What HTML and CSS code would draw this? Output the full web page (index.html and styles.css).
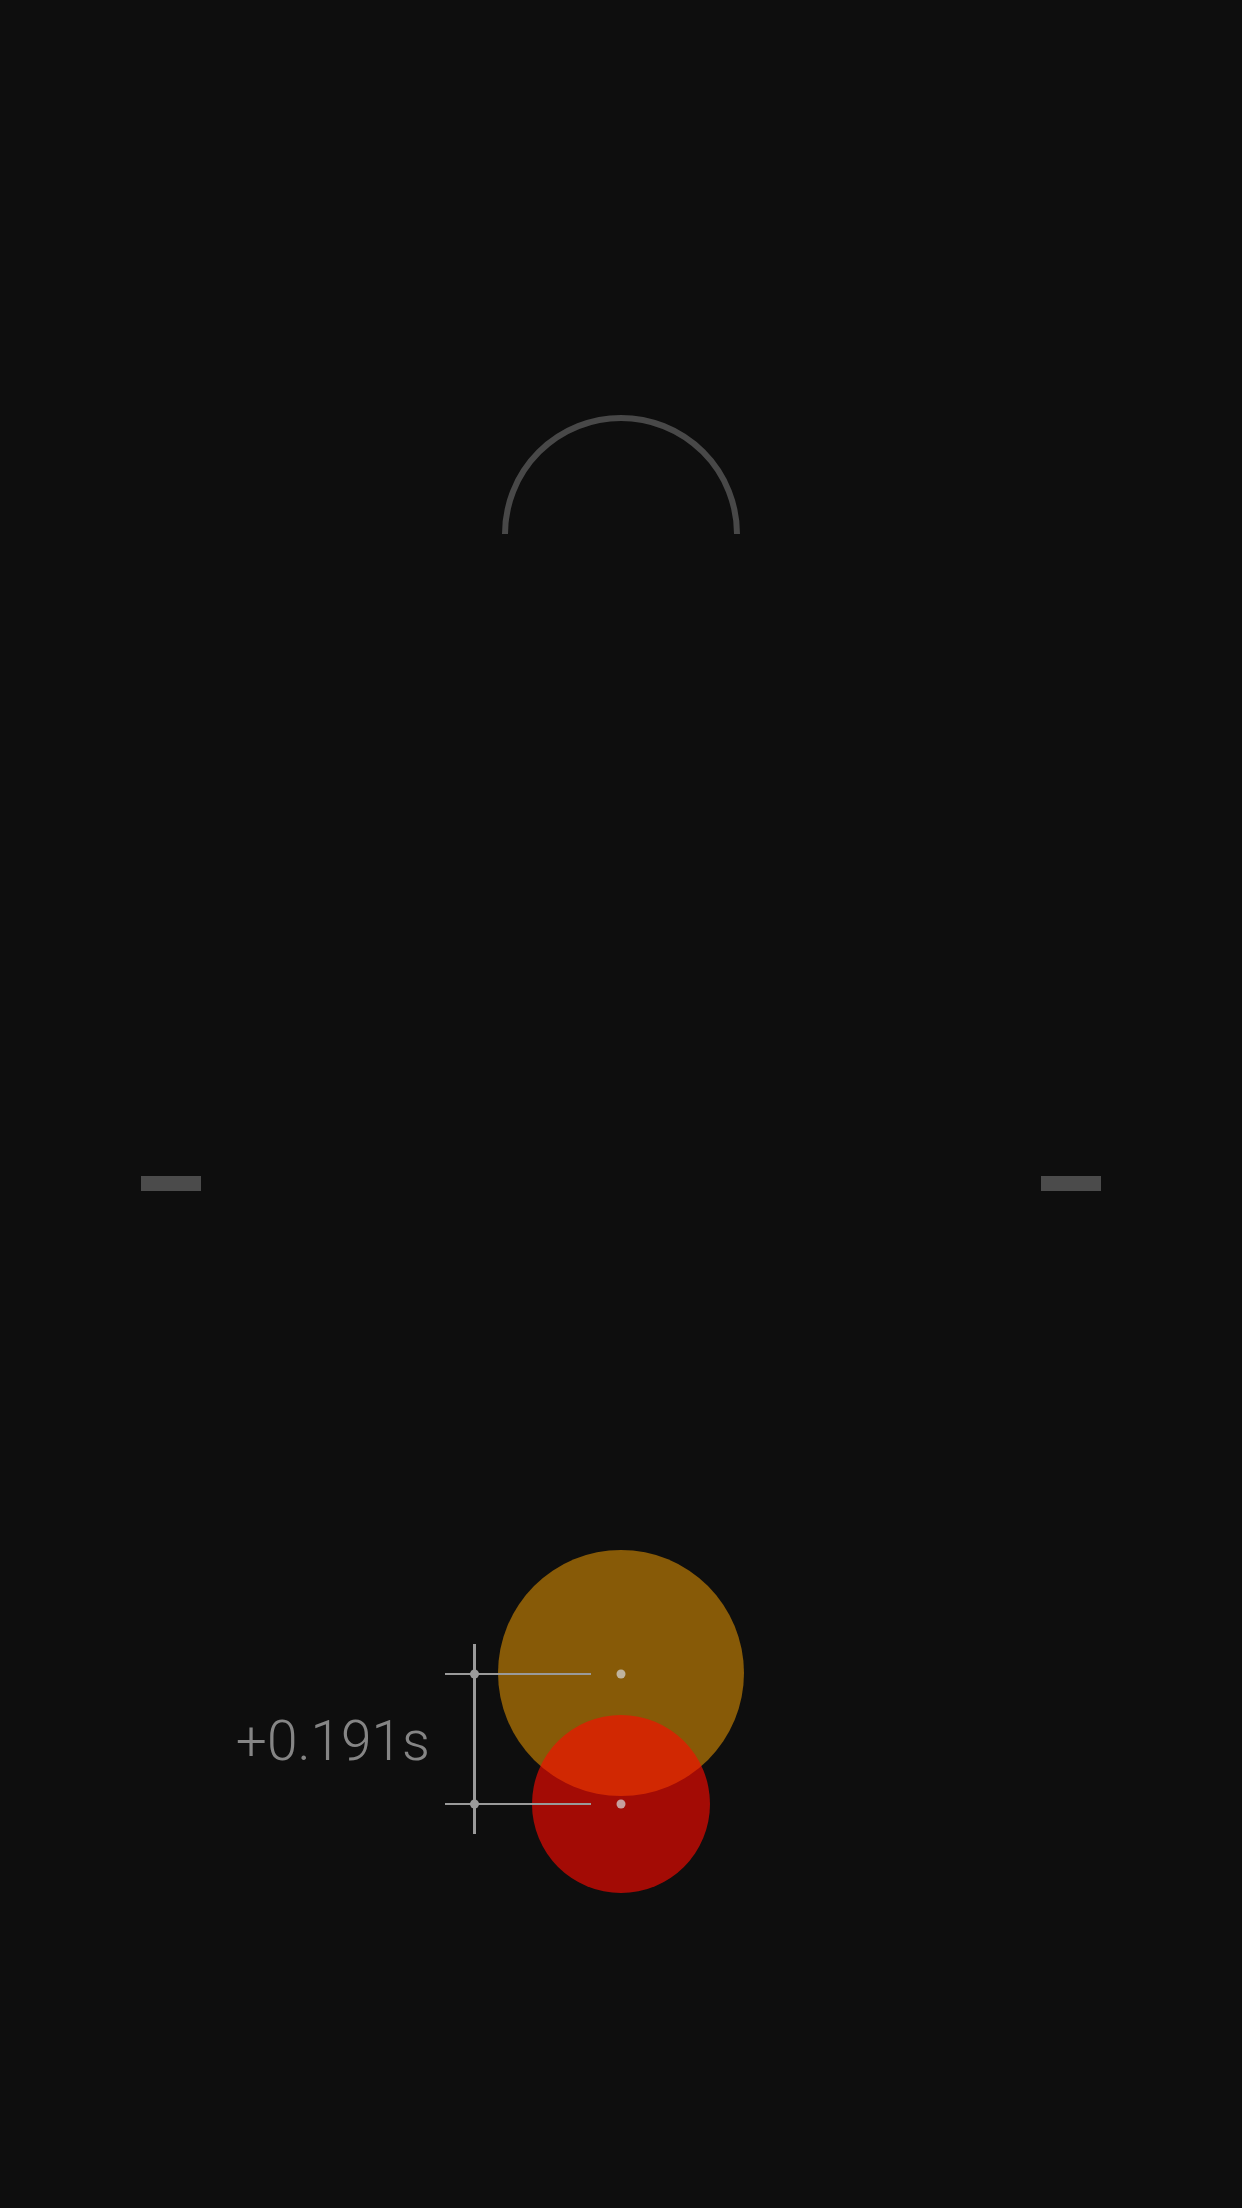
FILE: index.html
```html
<!DOCTYPE html>
<html lang="en">
<head>
    <meta charset="UTF-8">
    <meta name="viewport" content="width=device-width, initial-scale=1.0">
    <title>Timing</title>
    <link rel="stylesheet" href="styles.css">
</head>
<body>
    <div class="stage">
        <!-- target arc -->
        <div class="gauge">
            <svg class="gauge-arc" width="250" height="130" viewBox="0 0 250 130">
                <path d="M 9 124 A 116 116 0 0 1 241 124" />
            </svg>
        </div>

        <!-- level markers -->
        <div class="levels">
            <span class="level-mark"></span>
            <span class="level-mark"></span>
        </div>

        <!-- offset readout -->
        <div class="readout">
            <svg class="readout-svg" width="1242" height="360" viewBox="0 0 1242 360">
                <circle class="hit expected" cx="621" cy="133" r="123" />
                <circle class="hit actual" cx="621" cy="264" r="89" />

                <line class="guide" x1="445" y1="134" x2="591" y2="134" />
                <line class="guide" x1="445" y1="264" x2="591" y2="264" />
                <line class="bracket" x1="474.5" y1="104" x2="474.5" y2="294" />
                <circle class="knob" cx="474.5" cy="134" r="4.5" />
                <circle class="knob" cx="474.5" cy="264" r="4.5" />

                <circle class="center-dot" cx="621" cy="134" r="4.5" />
                <circle class="center-dot" cx="621" cy="264" r="4.5" />

                <text class="offset" x="430" y="220">+0.191s</text>
            </svg>
        </div>
    </div>
</body>
</html>
```

FILE: styles.css
```css
* {
    margin: 0;
    padding: 0;
    box-sizing: border-box;
}

html, body {
    background: #0e0e0e;
}

body {
    font-family: 'Roboto', 'Liberation Sans', sans-serif;
    overflow: hidden;
}

.stage {
    width: 1242px;
    height: 2208px;
    display: flex;
    flex-direction: column;
}

.gauge {
    margin-top: 410px;
    display: flex;
    justify-content: center;
}

.gauge-arc {
    display: block;
}

.gauge-arc path {
    fill: none;
    stroke: #484848;
    stroke-width: 6;
}

.levels {
    margin-top: 636px;
    padding: 0 141px;
    display: flex;
    justify-content: space-between;
}

.level-mark {
    display: block;
    width: 60px;
    height: 15px;
    background: #4b4b4b;
}

.readout {
    margin-top: 349px;
}

.readout-svg {
    display: block;
}

.hit.expected {
    fill: rgba(255, 165, 0, 0.5);
}

.hit.actual {
    fill: rgba(255, 10, 0, 0.62);
}

.guide {
    stroke: #9a9a9a;
    stroke-width: 2;
}

.bracket {
    stroke: #9a9a9a;
    stroke-width: 3;
}

.knob {
    fill: #9a9a9a;
}

.center-dot {
    fill: rgba(210, 210, 210, 0.75);
}

.offset {
    font-family: 'Roboto', 'Liberation Sans', sans-serif;
    font-weight: 300;
    font-size: 55px;
    fill: #858585;
    text-anchor: end;
}
```
